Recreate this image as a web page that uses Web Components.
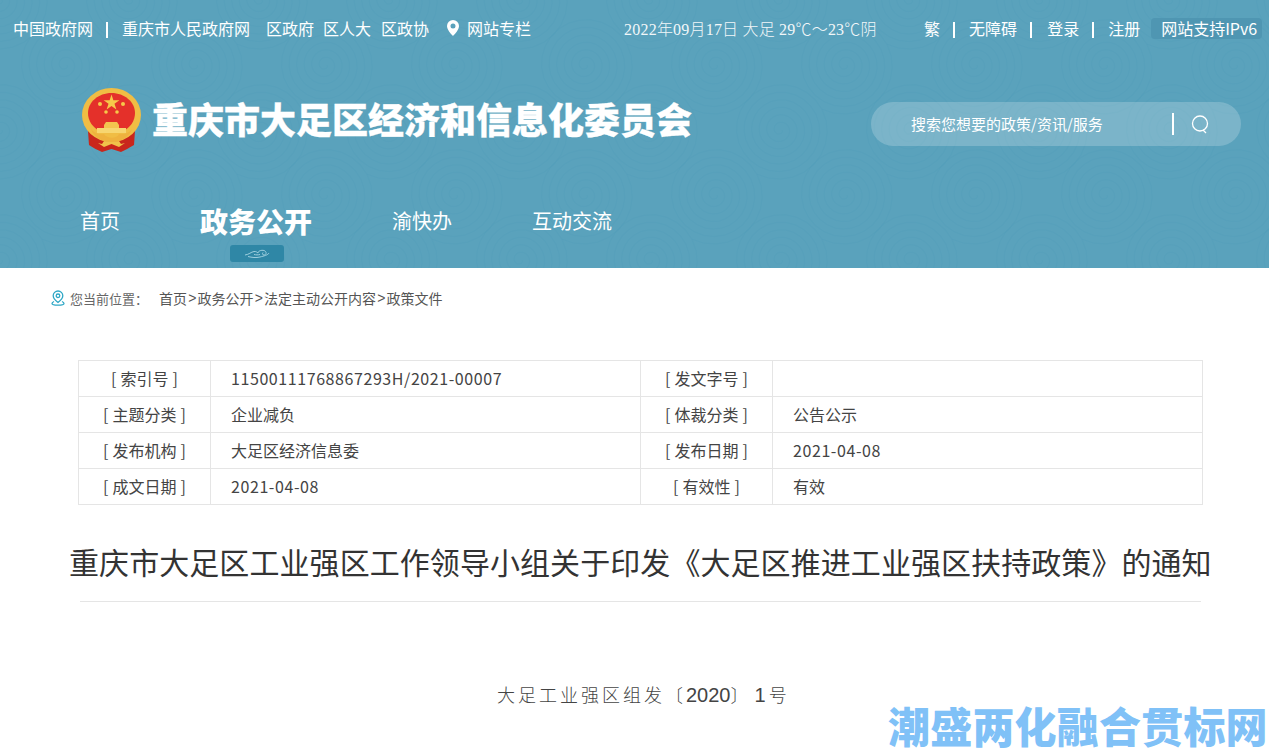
<!DOCTYPE html>
<html lang="zh-CN">
<head>
<meta charset="utf-8">
<title>重庆市大足区经济和信息化委员会</title>
<style>
    html, body { margin: 0; height: 750px; overflow: hidden; background: #fff; }
    body { font-family: "Noto Sans CJK SC", sans-serif; position: relative; }
</style>
</head>
<body>
<site-header>
    <top-bar></top-bar>
    <site-brand></site-brand>
    <site-nav></site-nav>
</site-header>
<bread-crumb></bread-crumb>
<info-table></info-table>
<article-head>
    <span slot="title">重庆市大足区工业强区工作领导小组关于印发《大足区推进工业强区扶持政策》的通知</span>
</article-head>
<water-mark>潮盛两化融合贯标网</water-mark>

<script>
// spiral for the header background, one path per tile corner
function spiral(cx, cy) {
    let d = '';
    for (let a = 0; a < 40; a += 0.25) {
        const r = 2 + a * 1.2;
        d += (a === 0 ? 'M' : 'L') + (cx + r * Math.cos(a)).toFixed(1) + ' ' + (cy + r * Math.sin(a)).toFixed(1);
    }
    return `<path d="${d}"/>`;
}

class SiteHeader extends HTMLElement {
    constructor() {
        super();
        this.attachShadow({ mode: 'open' });
        const centres = [[0, 0], [130, 0], [0, 130], [130, 130], [65, 65]];
        this.shadowRoot.innerHTML = `
            <style>
                :host {
                    display: block;
                    position: relative;
                    height: 268px;
                    overflow: hidden;
                    background: #5aa2bc;
                    color: #fff;
                }
                svg { position: absolute; inset: 0; width: 100%; height: 100%; }
                .content { position: relative; }
            </style>
            <svg aria-hidden="true">
                <defs>
                    <pattern id="swirl" width="130" height="130" patternUnits="userSpaceOnUse">
                        <g fill="none" stroke="#2d7f9c" stroke-opacity=".055" stroke-width="1.500">
                            ${centres.map(c => spiral(c[0], c[1])).join('')}
                        </g>
                    </pattern>
                </defs>
                <rect width="100%" height="100%" fill="url(#swirl)"/>
            </svg>
            <div class="content"><slot></slot></div>
        `;
    }
}

class TopBar extends HTMLElement {
    constructor() {
        super();
        this.attachShadow({ mode: 'open' });
        this.shadowRoot.innerHTML = `
            <style>
                :host {
                    display: flex;
                    align-items: center;
                    box-sizing: border-box;
                    height: 58px;
                    padding: 0 0 2px 13px;
                    font-size: 16px;
                    white-space: nowrap;
                }
                a { color: #fff; text-decoration: none; }
                .sep { width: 2px; height: 16px; background: #fff; margin: 4px 14px 0 13px; }
                .group { display: flex; align-items: center; }
                .ml16 { margin-left: 16px; }
                .ml9 { margin-left: 9px; }
                .ml10 { margin-left: 10px; }
                .ml1 { margin-left: 1px; }
                .pin { width: 12px; height: 16px; margin: 0 8px 0 18px; }
                .date {
                    margin-left: 93px;
                    width: 253px;
                    font-family: "Liberation Serif", "Noto Sans CJK SC", serif;
                    font-size: 16px;
                    font-weight: 300;
                    letter-spacing: .2px;
                    opacity: .92;
                }
                .right { margin-left: 47px; }
                .ipv6 {
                    margin: 1px 0 0 11px;
                    padding: 0 5px 0 10px;
                    height: 21px;
                    line-height: 21px;
                    border-radius: 4px;
                    background: #4f96b2;
                }
            </style>
            <a>中国政府网</a><i class="sep"></i><a>重庆市人民政府网</a>
            <a class="ml16">区政府</a><a class="ml9">区人大</a><a class="ml10">区政协</a>
            <svg class="pin" viewBox="0 0 12 16"><path fill="#fff" fill-rule="evenodd" d="M6 0a6 6 0 0 1 6 6c0 3.600-3.600 7.600-6 10C3.600 13.600 0 9.600 0 6a6 6 0 0 1 6-6zm0 3.500a2.500 2.500 0 1 0 0 5 2.500 2.500 0 0 0 0-5z"/></svg>
            <a>网站专栏</a>
            <span class="date">2022年09月17日 大足 29℃～23℃阴</span>
            <div class="group right">
                <a>繁</a><i class="sep"></i><a>无障碍</a><i class="sep"></i><a class="ml1">登录</a><i class="sep"></i><a>注册</a>
                <span class="ipv6">网站支持IPv6</span>
            </div>
        `;
    }
}

class SiteBrand extends HTMLElement {
    constructor() {
        super();
        this.attachShadow({ mode: 'open' });
        this.shadowRoot.innerHTML = `
            <style>
                :host {
                    display: flex;
                    align-items: center;
                    justify-content: space-between;
                    height: 66px;
                    padding: 29px 28px 0 80px;
                }
                .logo { display: flex; align-items: center; gap: 9px; }
                .emblem { width: 63px; height: 66px; flex: none; }
                h1 {
                    margin: 0 0 5px;
                    font-size: 36px;
                    line-height: 44px;
                    font-weight: 900;
                    color: #fff;
                    white-space: nowrap;
                    -webkit-text-stroke: .3px #fff;
                }
                .search {
                    width: 370px;
                    height: 44px;
                    margin-top: 8px;
                    box-sizing: border-box;
                    padding: 0 32px 2px 40px;
                    display: flex;
                    align-items: center;
                    border-radius: 22px;
                    background: rgba(255,255,255,.2);
                    font-size: 15px;
                    color: #fff;
                }
                .search span { flex: 1; }
                .search i { width: 2px; height: 22px; background: #fff; margin: 2px 17px 0 0; }
                .search svg { width: 18px; height: 20px; margin-top: 2px; }
            </style>
            <div class="logo">
                <svg class="emblem" viewBox="0 0 63 66">
                    <path d="M8 44h47l-1 14c-5 3-9 5-13 7l-9.500-3-9.500 3c-4-2-9-4-13-7z" fill="#c9261c"/>
                    <ellipse cx="31.500" cy="28" rx="29.500" ry="27" fill="#f0bd44"/>
                    <path d="M31.500 6C44.500 6 55 15 55 26c0 8-5 15-12 18H20C13 41 8 34 8 26 8 15 18.500 6 31.500 6z" fill="#e4302a"/>
                    <path d="M31.500 7.500l1.900 5.700h6l-4.900 3.500 1.900 5.800-4.900-3.600-4.900 3.600 1.900-5.800-4.900-3.500h6z" fill="#f6c84a"/>
                    <g fill="#f6c84a">
                        <circle cx="20" cy="17" r="2"/><circle cx="43" cy="17" r="2"/>
                        <circle cx="26" cy="25" r="1.800"/><circle cx="37" cy="25" r="1.800"/>
                    </g>
                    <path d="M24 41v-3l2-3h11l2 3v3z" fill="#f3c44f"/>
                    <rect x="17" y="41" width="29" height="5" fill="#f7d670"/>
                    <path d="M11 42c3 9 12 13 20.500 13S49 51 52 42c-3 4-8 6-13 5-2 5-12 5-15 0-5 1-10-1-13-5z" fill="#eeb23e"/>
                    <path d="M18 56l6 4 7.500-3 7.500 3 6-4-4 1-2-3-7.500 1-7.500-1-2 3z" fill="#f0c24a"/>
                </svg>
                <h1>重庆市大足区经济和信息化委员会</h1>
            </div>
            <div class="search">
                <span>搜索您想要的政策/资讯/服务</span>
                <i></i>
                <svg viewBox="0 0 18 20" fill="none" stroke="#fff" stroke-width="1.300"><circle cx="9" cy="9.500" r="7.500"/><path d="M12 16l3 3"/></svg>
            </div>
        `;
    }
}

class SiteNav extends HTMLElement {
    constructor() {
        super();
        this.attachShadow({ mode: 'open' });
        this.shadowRoot.innerHTML = `
            <style>
                :host {
                    display: flex;
                    gap: 80px;
                    padding: 43px 0 0 80px;
                    font-size: 20px;
                    line-height: 50px;
                }
                a { color: #fff; text-decoration: none; white-space: nowrap; }
                .on {
                    position: relative;
                    font-size: 28px;
                    font-weight: 900;
                }
                .on svg {
                    position: absolute;
                    left: 30px;
                    top: 49px;
                    width: 54px;
                    height: 17px;
                }
            </style>
            <a>首页</a>
            <a class="on">政务公开
                <svg viewBox="0 0 54 17">
                    <rect width="54" height="17" rx="3" fill="#2f87a6"/>
                    <g fill="none" stroke="#a9d6e3" stroke-width=".9">
                        <path d="M15 10c4-.5 6-3 9-3.500 2-.3 3 .7 4 1.500M18 11.500c4 1 8 1.500 12 .5 4-1 8-2 9-4"/>
                        <path d="M28 8c0-2.500 5-3.500 7-2 2 1.500 1 4-1 4-1.500 0-2-1.500-1-2.500M24 9.500c2 .5 4 .5 6 0"/>
                    </g>
                </svg>
            </a>
            <a>渝快办</a>
            <a>互动交流</a>
        `;
    }
}

class BreadCrumb extends HTMLElement {
    constructor() {
        super();
        this.attachShadow({ mode: 'open' });
        this.shadowRoot.innerHTML = `
            <style>
                :host {
                    display: flex;
                    align-items: center;
                    height: 60px;
                    padding-left: 51px;
                    font-size: 14px;
                    color: #555;
                    white-space: nowrap;
                }
                svg { width: 14px; height: 16px; margin-right: 5px; }
                .label { width: 89px; color: #666; font-size: 13px; }
                a { color: #555; text-decoration: none; }
                em {
                    width: 10.500px;
                    text-align: center;
                    font-style: normal;
                    font-family: "Liberation Sans", sans-serif;
                }
            </style>
            <svg viewBox="0 0 14 16" fill="none" stroke="#2ea7c6" stroke-width="1.300">
                <path d="M7 1a4.800 4.800 0 0 1 4.800 4.800C11.800 8.500 9 11 7 12.500 5 11 2.200 8.500 2.200 5.800A4.800 4.800 0 0 1 7 1z"/>
                <circle cx="7" cy="5.800" r="1.800"/>
                <path d="M3 11.500C1.500 12.300 1 13 1 13.500c0 1 2.500 1.700 6 1.700s6-.7 6-1.700c0-.5-.5-1.200-2-2"/>
            </svg>
            <span class="label">您当前位置：</span>
            <a>首页</a><em>&gt;</em><a>政务公开</a><em>&gt;</em><a>法定主动公开内容</a><em>&gt;</em><a>政策文件</a>
        `;
    }
}

class InfoTable extends HTMLElement {
    constructor() {
        super();
        this.attachShadow({ mode: 'open' });
        const rows = [
            ['[ 索引号 ]', '<span class="num">11500111768867293H/2021-00007</span>', '[ 发文字号 ]', ''],
            ['[ 主题分类 ]', '企业减负', '[ 体裁分类 ]', '公告公示'],
            ['[ 发布机构 ]', '大足区经济信息委', '[ 发布日期 ]', '<span class="num">2021-04-08</span>'],
            ['[ 成文日期 ]', '<span class="num">2021-04-08</span>', '[ 有效性 ]', '有效'],
        ];
        const body = rows.map(r => `
            <tr>
                <th>${r[0]}</th><td>${r[1]}</td>
                <th>${r[2]}</th><td>${r[3]}</td>
            </tr>`).join('');
        this.shadowRoot.innerHTML = `
            <style>
                :host {
                    display: block;
                    margin: 32px 66px 0 78px;
                    font-size: 16px;
                    color: #444;
                }
                table { width: 1124px; table-layout: fixed; border-collapse: collapse; }
                th, td {
                    height: 33px;
                    padding: 0 0 2px;
                    border: 1px solid #e5e5e5;
                    font-weight: 400;
                    line-height: 22px;
                    white-space: nowrap;
                }
                th { text-align: center; word-spacing: .5px; }
                td { padding-left: 20px; }
                .num { letter-spacing: .58px; }
            </style>
            <table>
                <colgroup><col style="width:132px"><col style="width:430px"><col style="width:132px"><col style="width:430px"></colgroup>
                <tbody>${body}</tbody>
            </table>
        `;
    }
}

class ArticleHead extends HTMLElement {
    constructor() {
        super();
        this.attachShadow({ mode: 'open' });
        this.shadowRoot.innerHTML = `
            <style>
                :host { display: block; }
                .title {
                    margin: 0 67px 0 69px;
                    padding: 34px 0 17px;
                    font-size: 30px;
                    line-height: 45px;
                    font-weight: 400;
                    letter-spacing: .07px;
                    color: #333;
                    text-align: center;
                    white-space: nowrap;
                }
                hr { margin: 0 68px 0 80px; border: 0; border-top: 1px solid #e5e5e5; }
                .number {
                    margin: 79px 0 0 497px;
                    font-size: 18px;
                    font-weight: 300;
                    line-height: 26px;
                    letter-spacing: 3px;
                    color: #444;
                    white-space: nowrap;
                }
                .number b {
                    font-family: "Liberation Sans", sans-serif;
                    font-size: 20px;
                    font-weight: 400;
                    letter-spacing: 0;
                }
                .number .one { margin: 0 3px 0 3px; }
            </style>
            <h2 class="title"><slot name="title"></slot></h2>
            <hr>
            <div class="number">大足工业强区组发〔<b>2020</b>〕<b class="one">1</b>号</div>
        `;
    }
}

class WaterMark extends HTMLElement {
    constructor() {
        super();
        this.attachShadow({ mode: 'open' });
        this.shadowRoot.innerHTML = `
            <style>
                :host {
                    position: absolute;
                    left: 888px;
                    top: 701px;
                    font-size: 42px;
                    line-height: 48px;
                    letter-spacing: .2px;
                    font-weight: 900;
                    color: #80c1f7;
                    white-space: nowrap;
                }
            </style>
            <slot></slot>
        `;
    }
}

customElements.define('site-header', SiteHeader);
customElements.define('top-bar', TopBar);
customElements.define('site-brand', SiteBrand);
customElements.define('site-nav', SiteNav);
customElements.define('bread-crumb', BreadCrumb);
customElements.define('info-table', InfoTable);
customElements.define('article-head', ArticleHead);
customElements.define('water-mark', WaterMark);
</script>
</body>
</html>
